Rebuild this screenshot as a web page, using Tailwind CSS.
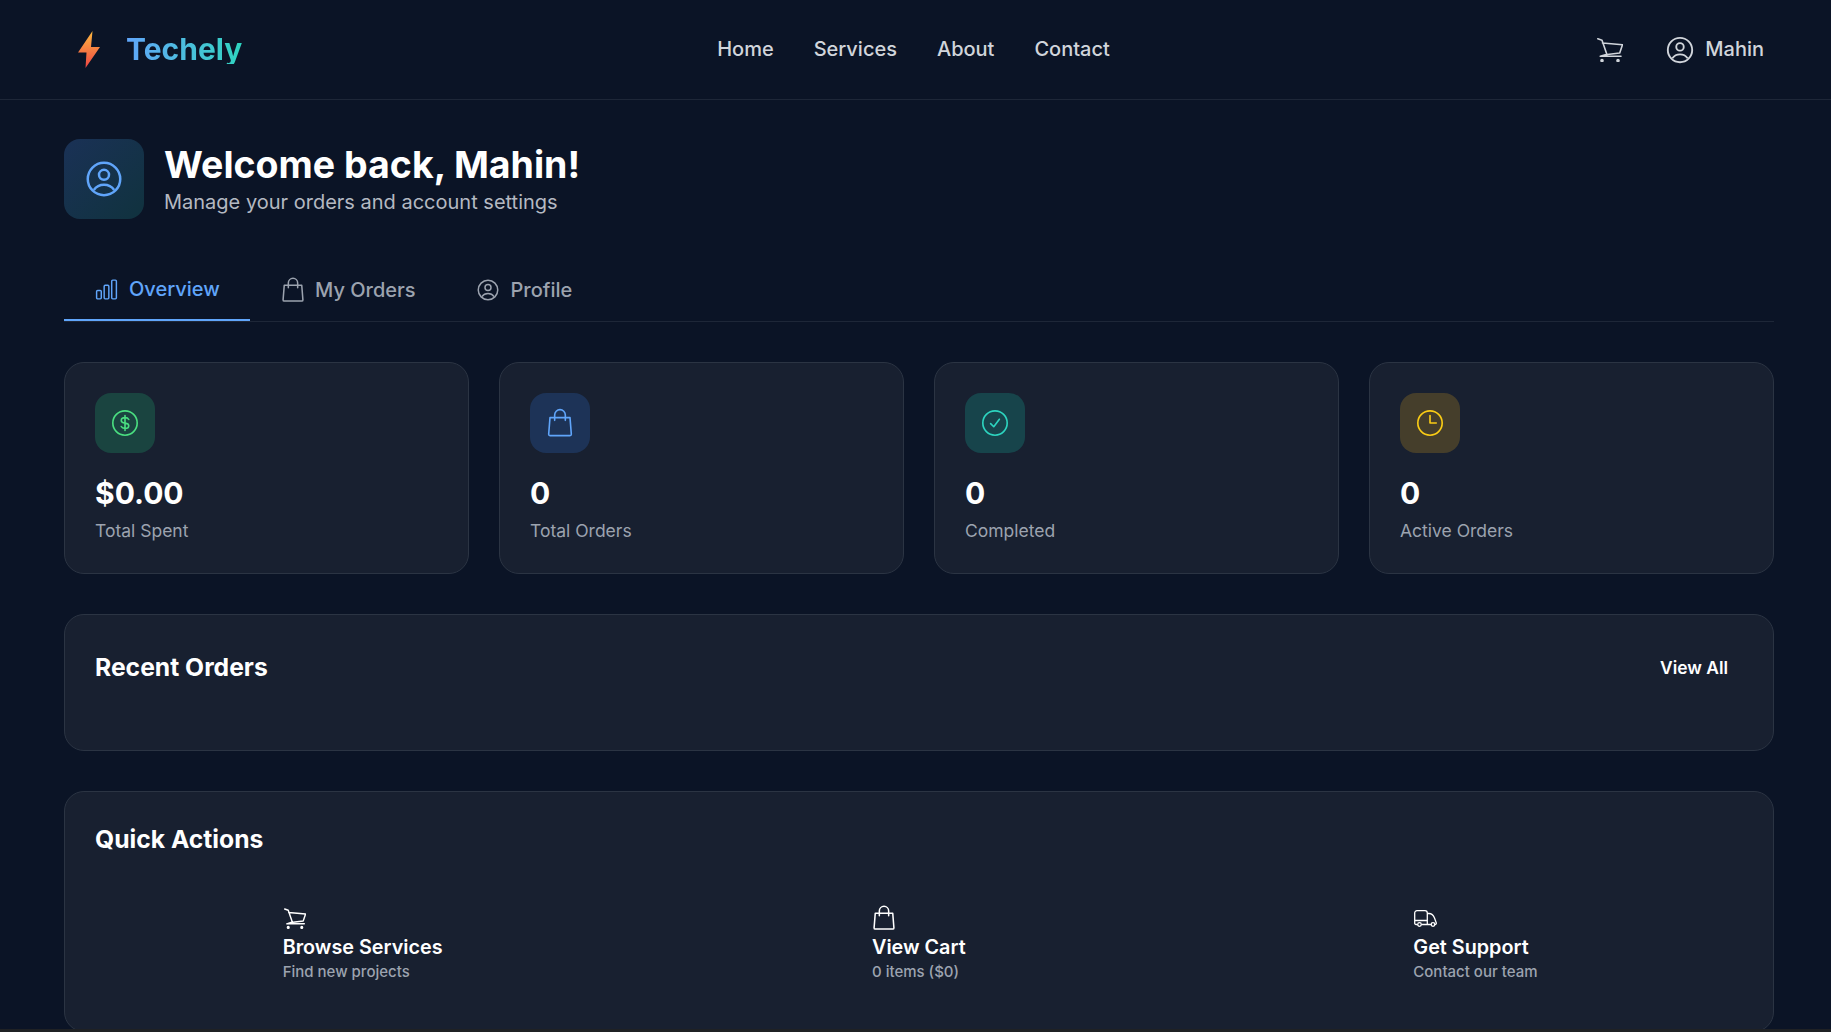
<!DOCTYPE html>
<html><head><meta charset="utf-8"><script src="https://cdn.jsdelivr.net/npm/@tailwindcss/browser@4"></script></head>
<body class="bg-[#0b1426] h-[1032px] overflow-hidden font-['Inter',sans-serif] text-white">
<div class="h-[1029px] overflow-hidden">
<header class="h-[100px] border-b border-[#1e2738] flex items-center pl-[78px] pr-[67px] justify-between">
  <div class="flex items-center gap-[26px] w-[399px]">
    <svg width="22" height="37" viewBox="0 0 22 37"><defs><linearGradient id="b" x1="0" y1="0" x2="0" y2="1"><stop offset="0" stop-color="#fdb93f"/><stop offset="1" stop-color="#ef4444"/></linearGradient></defs><path d="M14.500 0 L0 21.500 H8.500 L7.500 37 L22 16 H13 Z" fill="url(#b)"/></svg>
    <span class="text-[30px] font-bold leading-none -mt-[2px] bg-gradient-to-r from-[#60a5fa] to-[#2dd4bf] bg-clip-text text-transparent">Techely</span>
  </div>
  <nav class="flex gap-[40px] text-[20px] leading-[28px] font-medium text-[#d1d5db] -mt-[2px]"><span>Home</span><span>Services</span><span>About</span><span>Contact</span></nav>
  <div class="flex items-center justify-end gap-[42px] w-[414px] text-[#d1d5db]">
    <svg width="26" height="24" viewBox="0 0 26 24" fill="none" stroke="currentColor" stroke-width="1.600" stroke-linecap="round" stroke-linejoin="round"><path d="M.8.8 5 2.300l5 14.400M5.500 5 25.500 6.700 22.700 15 8.300 16.700 3.300 18.300H24"/><circle cx="5" cy="22.500" r="1" fill="currentColor"/><circle cx="21" cy="22.500" r="1" fill="currentColor"/></svg>
    <div class="flex items-center gap-[10px] text-[20px] font-medium"><svg width="30" height="30" viewBox="0 0 24 24" fill="none" stroke="currentColor" stroke-width="1.500"><circle cx="12" cy="12" r="9.750"/><circle cx="12" cy="9.500" r="3"/><path d="M5.900 18.600c1.400-2 3.600-3.100 6.100-3.100s4.700 1.100 6.100 3.100"/></svg><span class="-mt-[2px]">Mahin</span></div>
  </div>
</header>
<main class="pl-16 pr-[57px] pt-[39px]">
  <div class="flex items-center gap-[20px]">
    <div class="w-20 h-20 rounded-[16px] bg-gradient-to-br from-[#1a3156] to-[#10323e] flex items-center justify-center text-[#60a5fa]"><svg width="40" height="40" viewBox="0 0 24 24" fill="none" stroke="currentColor" stroke-width="1.500"><circle cx="12" cy="12" r="9.750"/><circle cx="12" cy="9.500" r="3"/><path d="M5.900 18.600c1.400-2 3.600-3.100 6.100-3.100s4.700 1.100 6.100 3.100"/></svg></div>
    <div><h1 class="text-[37.500px] font-bold leading-[44px]">Welcome back, Mahin!</h1><p class="text-[20px] leading-[28px] mt-[1px] text-[#b4b9c2]">Manage your orders and account settings</p></div>
  </div>
  <div class="mt-[40px] flex border-b border-[#1e2738] h-[63px] text-[20px] font-medium">
    <div class="w-[186px] h-[62px] pl-[30px] border-b-2 border-[#60a5fa] text-[#60a5fa] flex items-center gap-[10px]"><svg width="25" height="25" viewBox="0 0 24 24" fill="none" stroke="currentColor" stroke-width="1.400" stroke-linejoin="round"><rect x="2.500" y="13" width="4.500" height="8" rx="1"/><rect x="9.750" y="8" width="4.500" height="13" rx="1"/><rect x="17" y="3" width="4.500" height="18" rx="1"/></svg><span>Overview</span></div>
    <div class="flex items-center gap-[8px] text-[#9ca3af] ml-[29px]"><svg width="28" height="28" viewBox="0 0 24 24" fill="none" stroke="currentColor" stroke-width="1.300" stroke-linecap="round" stroke-linejoin="round"><path d="M8 10V6a4 4 0 0 1 8 0v4M4.500 8h15l1 12.500a1 1 0 0 1-1 1h-15a1 1 0 0 1-1-1Z"/></svg><span>My Orders</span></div>
    <div class="flex items-center gap-[11px] text-[#9ca3af] ml-[60px]"><svg width="24" height="24" viewBox="0 0 24 24" fill="none" stroke="currentColor" stroke-width="1.500"><circle cx="12" cy="12" r="9.750"/><circle cx="12" cy="9.500" r="3"/><path d="M5.900 18.600c1.400-2 3.600-3.100 6.100-3.100s4.700 1.100 6.100 3.100"/></svg><span>Profile</span></div>
  </div>
  <div class="mt-[40px] grid grid-cols-4 gap-[30px]">
    <div class="h-[212px] rounded-[20px] bg-[#182030] border border-[#2b3443] px-[30px] pt-[30px]"><div class="w-[60px] h-[60px] rounded-[16px] bg-[#1a4440] flex items-center justify-center text-[#4ade80]"><svg width="30" height="30" viewBox="0 0 24 24" fill="none" stroke="currentColor" stroke-width="1.300" stroke-linecap="round"><circle cx="12" cy="12" r="9.750"/><path d="M12 6v12M15 9.200c-.5-1-1.700-1.500-3-1.500-1.700 0-3 .9-3 2.200s1.300 1.900 3 2.100 3 .9 3 2.100-1.300 2.200-3 2.200c-1.300 0-2.500-.5-3-1.500"/></svg></div><div class="mt-[20px] text-[30px] font-bold leading-[40px]">$0.00</div><div class="mt-[4px] text-[17.500px] leading-[28px] text-[#9ca3af]">Total Spent</div></div>
    <div class="h-[212px] rounded-[20px] bg-[#182030] border border-[#2b3443] px-[30px] pt-[30px]"><div class="w-[60px] h-[60px] rounded-[16px] bg-[#1d3357] flex items-center justify-center text-[#60a5fa]"><svg width="32" height="32" viewBox="0 0 24 24" fill="none" stroke="currentColor" stroke-width="1.200" stroke-linecap="round" stroke-linejoin="round"><path d="M8 10V6a4 4 0 0 1 8 0v4M4.500 8h15l1 12.500a1 1 0 0 1-1 1h-15a1 1 0 0 1-1-1Z"/></svg></div><div class="mt-[20px] text-[30px] font-bold leading-[40px]">0</div><div class="mt-[4px] text-[17.500px] leading-[28px] text-[#9ca3af]">Total Orders</div></div>
    <div class="h-[212px] rounded-[20px] bg-[#182030] border border-[#2b3443] px-[30px] pt-[30px]"><div class="w-[60px] h-[60px] rounded-[16px] bg-[#17444b] flex items-center justify-center text-[#2dd4bf]"><svg width="30" height="30" viewBox="0 0 24 24" fill="none" stroke="currentColor" stroke-width="1.300" stroke-linecap="round" stroke-linejoin="round"><circle cx="12" cy="12" r="9.750"/><path d="M8.500 12.500l2.500 2.500 4.500-6"/></svg></div><div class="mt-[20px] text-[30px] font-bold leading-[40px]">0</div><div class="mt-[4px] text-[17.500px] leading-[28px] text-[#9ca3af]">Completed</div></div>
    <div class="h-[212px] rounded-[20px] bg-[#182030] border border-[#2b3443] px-[30px] pt-[30px]"><div class="w-[60px] h-[60px] rounded-[16px] bg-[#453e2b] flex items-center justify-center text-[#facc15]"><svg width="30" height="30" viewBox="0 0 24 24" fill="none" stroke="currentColor" stroke-width="1.300" stroke-linecap="round" stroke-linejoin="round"><circle cx="12" cy="12" r="9.750"/><path d="M12 6v6h5"/></svg></div><div class="mt-[20px] text-[30px] font-bold leading-[40px]">0</div><div class="mt-[4px] text-[17.500px] leading-[28px] text-[#9ca3af]">Active Orders</div></div>
  </div>
  <section class="mt-[40px] h-[137px] rounded-[20px] bg-[#182030] border border-[#2b3443] pl-[30px] pr-[45px] pt-[34px] flex items-start justify-between">
    <h2 class="text-[24.700px] font-bold leading-[36px]">Recent Orders</h2><span class="text-[17.400px] font-semibold leading-[36px] mt-[1px]">View All</span>
  </section>
  <section class="mt-[40px] h-[241px] rounded-[20px] bg-[#182030] border border-[#2b3443] px-[30px] pt-[29px]">
    <h2 class="text-[24.700px] font-bold leading-[36px]">Quick Actions</h2>
    <div class="grid grid-cols-3 mt-[46px]">
      <div class="flex justify-center"><div class="w-[174px]"><div class="h-[30px] flex items-center"><svg class="ml-[1px]" width="22" height="21" viewBox="0 0 26 24" fill="none" stroke="currentColor" stroke-width="1.700" stroke-linecap="round" stroke-linejoin="round"><path d="M.8.8 5 2.300l5 14.400M5.500 5 25.500 6.700 22.700 15 8.300 16.700 3.300 18.300H24"/><circle cx="5" cy="22.500" r="1" fill="currentColor"/><circle cx="21" cy="22.500" r="1" fill="currentColor"/></svg></div><div class="text-[19.800px] font-semibold leading-[28px] whitespace-nowrap">Browse Services</div><div class="text-[15px] font-medium leading-[20px] mt-[1px] text-[#9ca3af] whitespace-nowrap">Find new projects</div></div></div>
      <div class="flex justify-center"><div class="w-[94px]"><div class="h-[30px] flex items-center"><svg class="-ml-[2px] shrink-0" width="28" height="28" viewBox="0 0 24 24" fill="none" stroke="currentColor" stroke-width="1.300" stroke-linecap="round" stroke-linejoin="round"><path d="M8 10V6a4 4 0 0 1 8 0v4M4.500 8h15l1 12.500a1 1 0 0 1-1 1h-15a1 1 0 0 1-1-1Z"/></svg></div><div class="text-[19.800px] font-semibold leading-[28px] whitespace-nowrap">View Cart</div><div class="text-[15px] font-medium leading-[20px] mt-[1px] text-[#9ca3af] whitespace-nowrap">0 items ($0)</div></div></div>
      <div class="flex justify-center"><div class="w-[110px]"><div class="h-[30px] flex items-center"><svg class="ml-[1px] shrink-0" width="23" height="17" viewBox="0 0 23 17" fill="none" stroke="currentColor" stroke-width="1.300" stroke-linecap="round" stroke-linejoin="round"><path d="M3 14.500H2A1.300 1.300 0 0 1 .7 13.200V3A2.300 2.300 0 0 1 3 .7h8A2.300 2.300 0 0 1 13.300 3v11.500H8M.7 10.500h12.600M13.300 3.500H15c2.500 0 4.500 2 5.500 4.500l1.800 5a1.300 1.300 0 0 1-1.300 1.500h-.5M17 14.500h-3.700"/><circle cx="5.500" cy="14.500" r="1.800"/><circle cx="19" cy="14.500" r="1.800"/></svg></div><div class="text-[19.800px] font-semibold leading-[28px] whitespace-nowrap">Get Support</div><div class="text-[15px] font-medium leading-[20px] mt-[1px] text-[#9ca3af] whitespace-nowrap">Contact our team</div></div></div>
    </div>
  </section>
</main>
</div>
<div class="h-[3px] bg-[#1f2124]"></div>
</body></html>
